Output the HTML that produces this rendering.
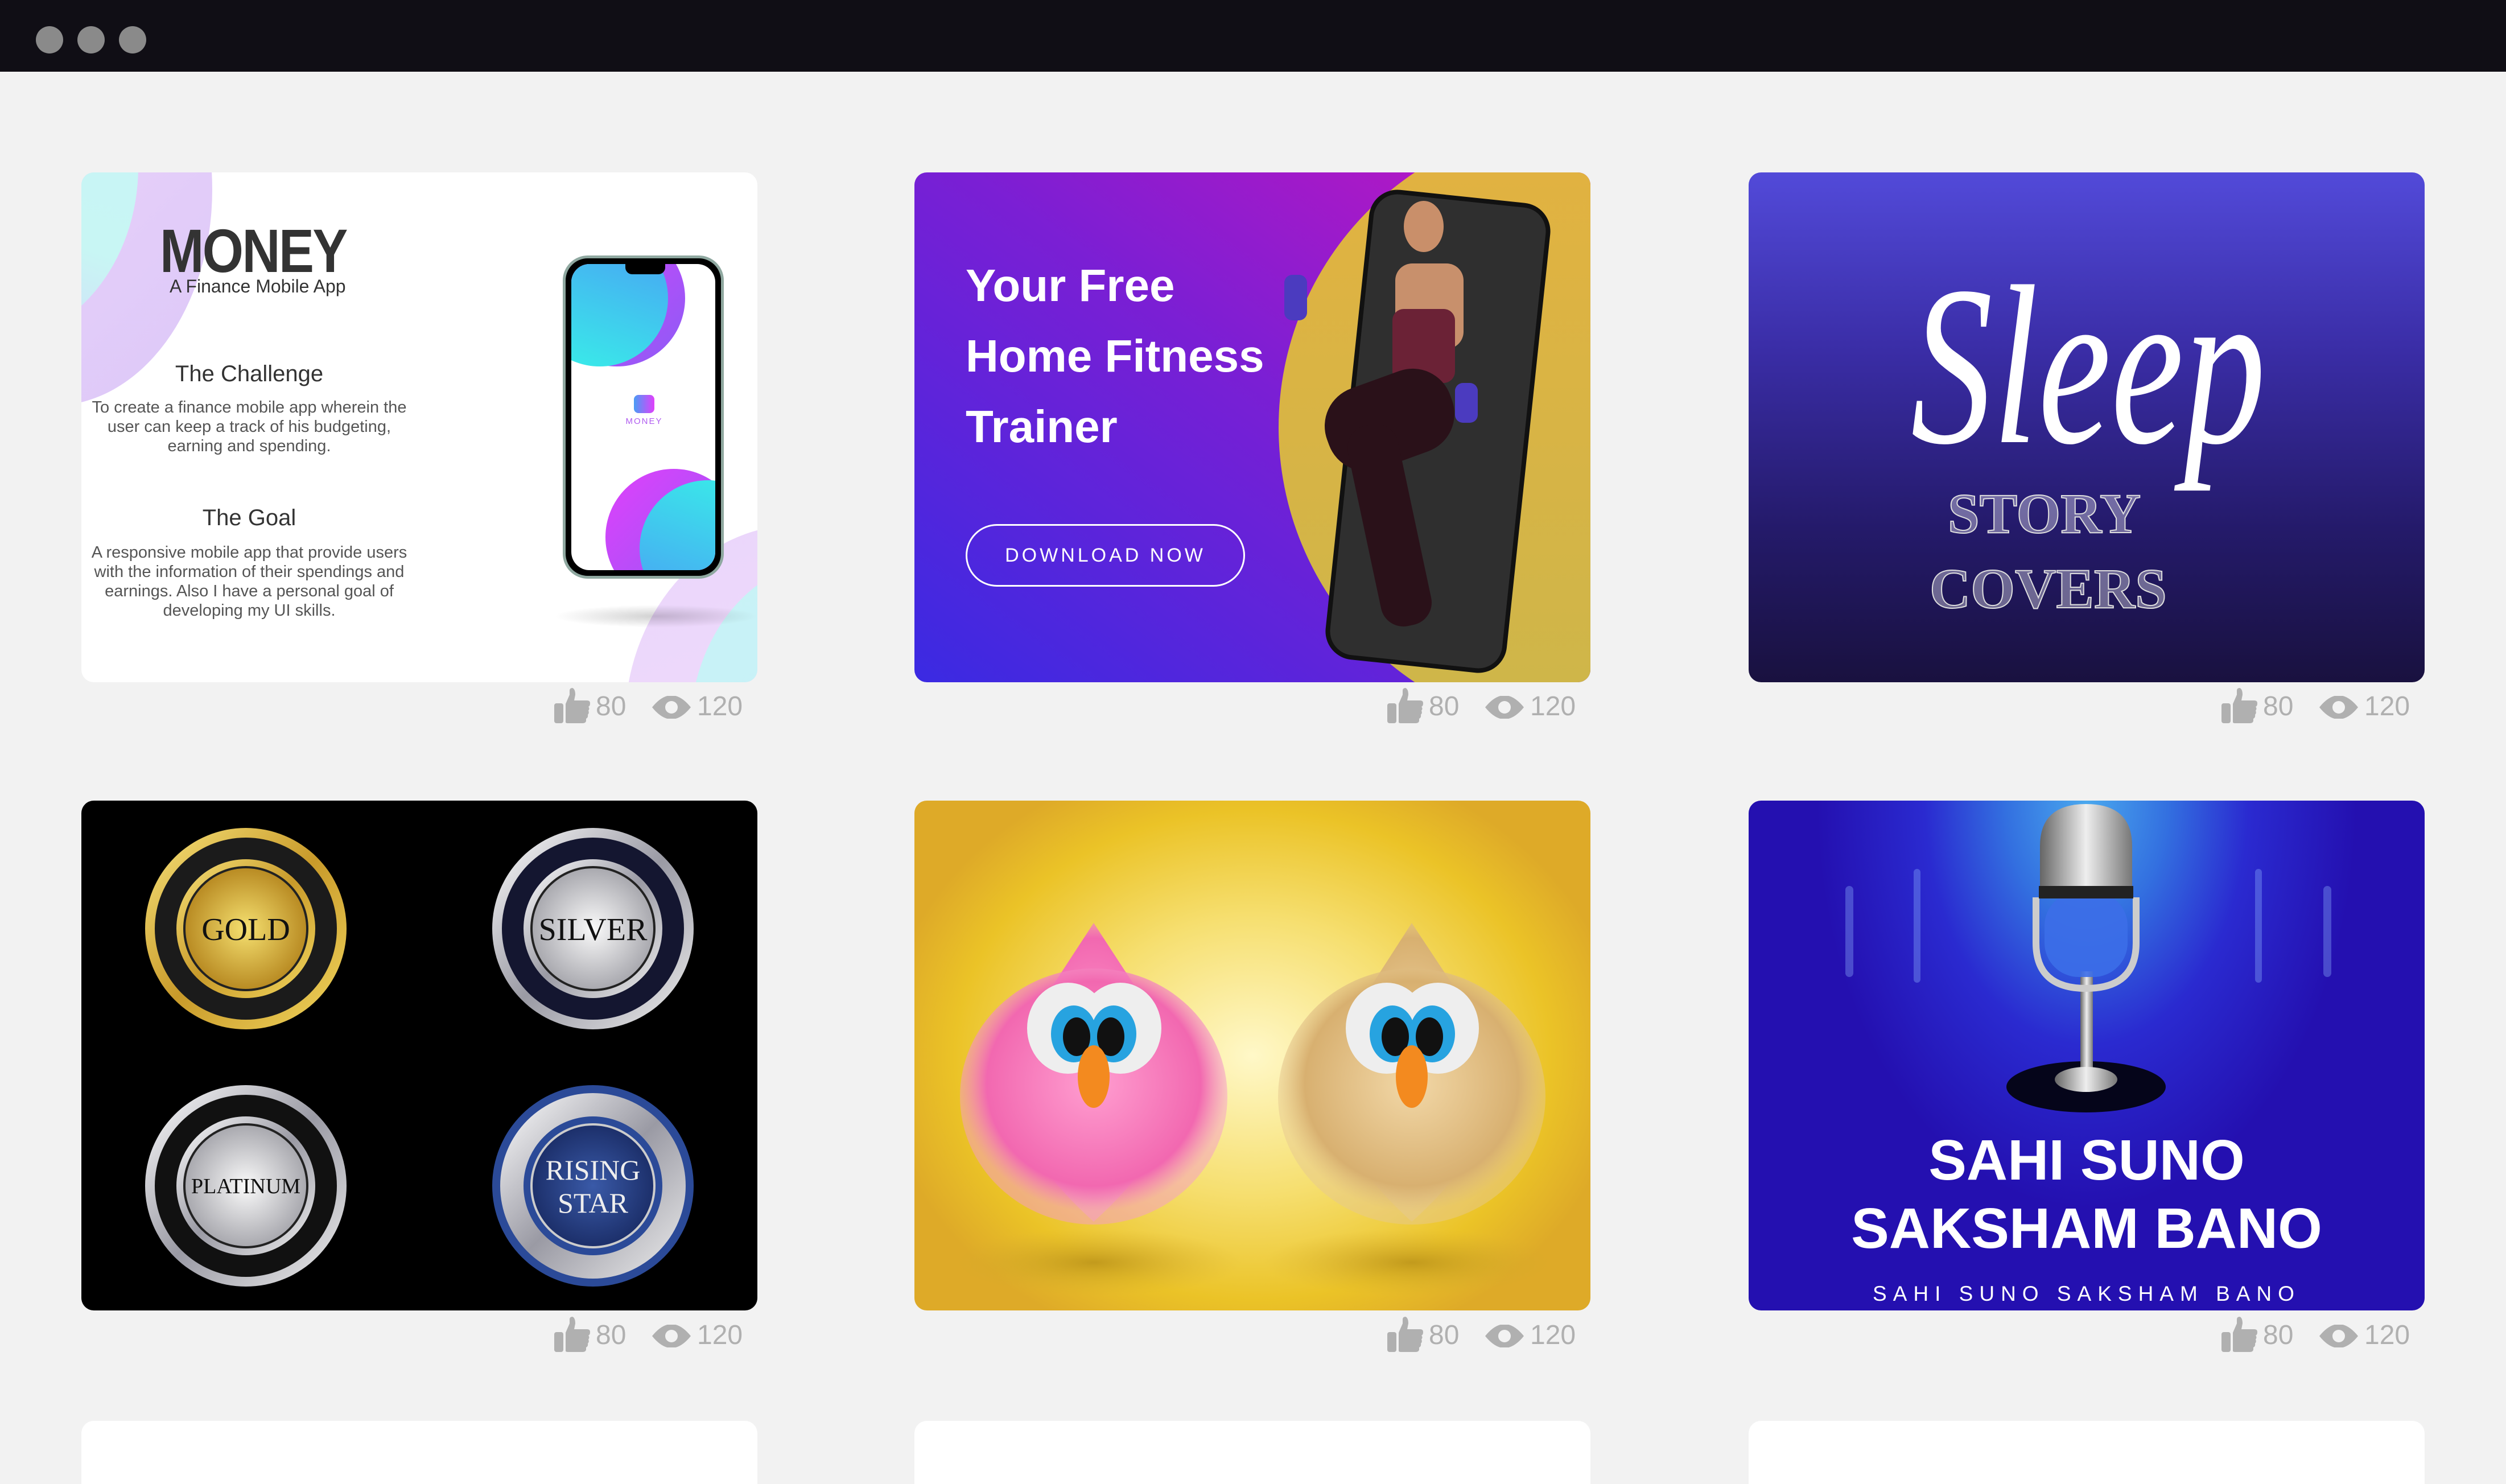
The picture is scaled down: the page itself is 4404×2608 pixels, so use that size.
<!DOCTYPE html>
<html style="width:4404px;height:2608px;overflow:hidden"><head><meta charset="utf-8"><style>
*{margin:0;padding:0;box-sizing:border-box}
body{width:4404px;height:2608px;background:#f2f2f2;position:relative;overflow:hidden;font-family:"Liberation Sans",sans-serif}
.bar{position:absolute;left:0;top:0;width:4404px;height:126px;background:#100e15}
.dot{position:absolute;top:46px;width:48px;height:48px;border-radius:50%;background:#8a8a8a}
.card{position:absolute;width:1188px;height:896px;border-radius:22px;overflow:hidden}
.abs{position:absolute}
.stats{position:absolute;width:360px;height:64px}
.stats span{position:absolute;top:8px;font-size:48px;color:#b0b0b0;line-height:50px}
</style></head><body>
<div class="bar"></div>
<div class="dot" style="left:63px"></div><div class="dot" style="left:136px"></div><div class="dot" style="left:209px"></div>

<!-- Card 1 -->
<div class="card" style="left:143px;top:303px;background:#fff">
  <div class="abs" style="left:-330px;top:-350px;width:560px;height:760px;border-radius:50%;background:linear-gradient(135deg,#f0d6fb,#dcc8f8)"></div>
  <div class="abs" style="left:-420px;top:-320px;width:520px;height:620px;border-radius:50%;background:linear-gradient(200deg,#c8f2f8,#c8f6f4 60%,#d6d0fa)"></div>
  <div class="abs" style="left:955px;top:620px;width:600px;height:700px;border-radius:50%;background:linear-gradient(160deg,#ead6fb,#f3dcfb)"></div>
  <div class="abs" style="left:1070px;top:680px;width:500px;height:600px;border-radius:50%;background:linear-gradient(160deg,#c9f3f6,#c6eefa)"></div>
  <div class="abs" style="left:138px;top:84px;font-size:108px;font-weight:bold;color:#333;line-height:1;letter-spacing:-3px;transform:scaleX(0.86);transform-origin:left top">MONEY</div>
  <div class="abs" style="left:155px;top:182px;font-size:32px;color:#333">A Finance Mobile App</div>
  <div class="abs" style="left:15px;top:332px;width:560px;text-align:center;font-size:40px;color:#333">The Challenge</div>
  <div class="abs" style="left:15px;top:396px;width:560px;text-align:center;font-size:29px;line-height:34px;color:#555">To create a finance mobile app wherein the user can keep a track of his budgeting, earning and spending.</div>
  <div class="abs" style="left:15px;top:585px;width:560px;text-align:center;font-size:40px;color:#333">The Goal</div>
  <div class="abs" style="left:15px;top:651px;width:560px;text-align:center;font-size:29px;line-height:34px;color:#555">A responsive mobile app that provide users with the information of their spendings and earnings. Also I have a personal goal of developing my UI skills.</div>
  <div class="abs" style="left:830px;top:760px;width:360px;height:40px;border-radius:50%;background:radial-gradient(ellipse,rgba(0,0,0,0.18),rgba(0,0,0,0) 70%)"></div>
  <div class="abs" style="left:846px;top:146px;width:283px;height:568px;border-radius:44px;border:5px solid #8fa8a0;background:#000;padding:10px">
    <div style="position:relative;width:100%;height:100%;border-radius:32px;background:#fff;overflow:hidden">
      <div class="abs" style="left:-40px;top:-60px;width:240px;height:240px;border-radius:50%;background:linear-gradient(135deg,#e040fb,#8b5cf6)"></div>
      <div class="abs" style="left:-70px;top:-60px;width:240px;height:240px;border-radius:50%;background:linear-gradient(200deg,#4a9cf5,#38f0e8)"></div>
      <div class="abs" style="left:60px;top:360px;width:240px;height:240px;border-radius:50%;background:linear-gradient(135deg,#e040fb,#8b5cf6)"></div>
      <div class="abs" style="left:120px;top:380px;width:240px;height:240px;border-radius:50%;background:linear-gradient(200deg,#38f0e8,#4a9cf5)"></div>
      <div class="abs" style="left:95px;top:0;width:70px;height:18px;background:#000;border-radius:0 0 12px 12px"></div>
      <div class="abs" style="left:110px;top:230px;width:36px;height:32px;border-radius:8px;background:linear-gradient(90deg,#4a9cf5,#e040fb)"></div>
      <div class="abs" style="left:70px;top:268px;width:116px;text-align:center;font-size:15px;color:#b05cf0;letter-spacing:2px">MONEY</div>
    </div>
  </div>
</div>

<!-- Card 2 -->
<div class="card" style="left:1607px;top:303px;background:linear-gradient(35deg,#3a2ae2 0%,#7a1fd4 55%,#c216c0 100%)">
  <div class="abs" style="left:640px;top:-91px;width:1078px;height:1078px;border-radius:50%;background:linear-gradient(180deg,#e3b240,#cdb64a)"></div>
  <div class="abs" style="left:760px;top:40px;width:320px;height:830px;border-radius:50px;background:#2f2f2f;border:8px solid #111;transform:rotate(6deg)"></div>
  <div class="abs" style="left:860px;top:50px;width:70px;height:90px;border-radius:50%;background:#c98f6a"></div>
  <div class="abs" style="left:845px;top:160px;width:120px;height:150px;border-radius:30px;background:#c8906c"></div>
  <div class="abs" style="left:840px;top:240px;width:110px;height:130px;border-radius:20px;background:#6b2236"></div>
  <div class="abs" style="left:720px;top:360px;width:230px;height:150px;border-radius:70px;background:#2a1119;transform:rotate(-20deg)"></div>
  <div class="abs" style="left:790px;top:440px;width:90px;height:360px;border-radius:40px;background:#2a1119;transform:rotate(-12deg)"></div>
  <div class="abs" style="left:650px;top:180px;width:40px;height:80px;border-radius:14px;background:#4b3bbf"></div>
  <div class="abs" style="left:950px;top:370px;width:40px;height:70px;border-radius:14px;background:#4b3bbf"></div>
  <div class="abs" style="left:90px;top:137px;font-size:80px;font-weight:bold;color:#fff;line-height:124px">Your Free<br>Home Fitness<br>Trainer</div>
  <div class="abs" style="left:90px;top:618px;width:491px;height:110px;border:3px solid #fff;border-radius:55px;color:#fff;font-size:34px;letter-spacing:5px;text-align:center;line-height:104px">DOWNLOAD NOW</div>
</div>

<!-- Card 3 -->
<div class="card" style="left:3073px;top:303px;background:linear-gradient(180deg,#524ad9 0%,#3a2da6 35%,#241a6a 70%,#19113f 100%)">
  <div class="abs" style="left:285px;top:140px;font-family:'Liberation Serif',serif;font-style:italic;font-size:400px;line-height:1;color:#fff;transform:scaleX(0.72);transform-origin:left top">Sleep</div>
  <div class="abs" style="left:350px;top:540px;font-family:'Liberation Serif',serif;font-weight:bold;font-size:100px;color:rgba(255,255,255,0.35);-webkit-text-stroke:2px #ddd;line-height:1.2">STORY</div>
  <div class="abs" style="left:318px;top:672px;font-family:'Liberation Serif',serif;font-weight:bold;font-size:100px;color:rgba(255,255,255,0.35);-webkit-text-stroke:2px #ddd;line-height:1.2">COVERS</div>
</div>

<!-- Card 4 -->
<div class="card" style="left:143px;top:1407px;background:#000">
  <svg class="abs" style="left:0;top:0" width="1188" height="896">
    <defs>
      <linearGradient id="g" x1="0" y1="0" x2="1" y2="1"><stop offset="0" stop-color="#f7e27a"/><stop offset=".5" stop-color="#c89a2a"/><stop offset="1" stop-color="#f2d65e"/></linearGradient>
      <linearGradient id="s" x1="0" y1="0" x2="1" y2="1"><stop offset="0" stop-color="#fff"/><stop offset=".5" stop-color="#9a9aa4"/><stop offset="1" stop-color="#eee"/></linearGradient>
      <radialGradient id="gi"><stop offset="0" stop-color="#f5e070"/><stop offset="1" stop-color="#b88a22"/></radialGradient>
      <radialGradient id="si"><stop offset="0" stop-color="#fafafa"/><stop offset="1" stop-color="#a8a8ae"/></radialGradient>
      <radialGradient id="bi"><stop offset="0" stop-color="#3a5aa8"/><stop offset="1" stop-color="#1c2f6a"/></radialGradient>
    </defs>
    <circle cx="289" cy="225" r="177" fill="url(#g)"/><circle cx="289" cy="225" r="160" fill="#1b1b1b"/><circle cx="289" cy="225" r="122" fill="url(#g)"/><circle cx="289" cy="225" r="108" fill="url(#gi)" stroke="#222" stroke-width="4"/>
    <circle cx="899" cy="225" r="177" fill="url(#s)"/><circle cx="899" cy="225" r="160" fill="#141630"/><circle cx="899" cy="225" r="122" fill="url(#s)"/><circle cx="899" cy="225" r="108" fill="url(#si)" stroke="#222" stroke-width="4"/>
    <circle cx="289" cy="677" r="177" fill="url(#s)"/><circle cx="289" cy="677" r="160" fill="#111"/><circle cx="289" cy="677" r="122" fill="url(#s)"/><circle cx="289" cy="677" r="108" fill="url(#si)" stroke="#222" stroke-width="4"/>
    <circle cx="899" cy="677" r="177" fill="#2b4a98"/><circle cx="899" cy="677" r="163" fill="url(#s)"/><circle cx="899" cy="677" r="122" fill="#2b4a98"/><circle cx="899" cy="677" r="108" fill="url(#bi)" stroke="#ccc" stroke-width="4"/>
    <g font-family="Liberation Serif,serif" text-anchor="middle">
      <text x="289" y="245" font-size="56" fill="#111">GOLD</text>
      <text x="899" y="245" font-size="56" fill="#111">SILVER</text>
      <text x="289" y="690" font-size="38" fill="#111">PLATINUM</text>
      <text x="899" y="666" font-size="50" fill="#eee">RISING</text>
      <text x="899" y="724" font-size="50" fill="#eee">STAR</text>
    </g>
  </svg>
</div>

<!-- Card 5 -->
<div class="card" style="left:1607px;top:1407px;background:radial-gradient(ellipse 55% 60% at 50% 50%,#fff8c8 0%,#f6df70 45%,#ebc327 80%,#deaa28 100%)">
  <svg class="abs" style="left:0;top:0" width="1188" height="896">
    <defs>
      <radialGradient id="sh"><stop offset="0" stop-color="#b8901a" stop-opacity=".8"/><stop offset="1" stop-color="#d9b030" stop-opacity="0"/></radialGradient>
      <radialGradient id="pk" cx=".5" cy=".45"><stop offset="0" stop-color="#ff9ed0"/><stop offset=".8" stop-color="#f268b0"/><stop offset="1" stop-color="#f59ccc" stop-opacity=".5"/></radialGradient>
      <radialGradient id="tn" cx=".5" cy=".45"><stop offset="0" stop-color="#f2d8a8"/><stop offset=".8" stop-color="#d8b070"/><stop offset="1" stop-color="#e6c890" stop-opacity=".5"/></radialGradient>
    </defs>
    <ellipse cx="315" cy="812" rx="260" ry="60" fill="url(#sh)"/>
    <ellipse cx="874" cy="812" rx="260" ry="60" fill="url(#sh)"/>
    <path d="M315 215 L390 330 Q560 520 315 740 Q70 520 240 330 Z" fill="url(#pk)"/>
    <ellipse cx="315" cy="520" rx="235" ry="225" fill="url(#pk)"/>
    <path d="M874 215 L950 330 Q1120 520 874 740 Q630 520 800 330 Z" fill="url(#tn)"/>
    <ellipse cx="874" cy="520" rx="235" ry="225" fill="url(#tn)"/>
    <g>
      <ellipse cx="270" cy="400" rx="72" ry="80" fill="#eee"/><ellipse cx="362" cy="400" rx="72" ry="80" fill="#eee"/>
      <ellipse cx="280" cy="410" rx="40" ry="50" fill="#27a3e0"/><ellipse cx="350" cy="410" rx="40" ry="50" fill="#27a3e0"/>
      <ellipse cx="285" cy="415" rx="24" ry="34" fill="#111"/><ellipse cx="345" cy="415" rx="24" ry="34" fill="#111"/>
      <ellipse cx="315" cy="485" rx="28" ry="55" fill="#f38a1f"/>
    </g>
    <g>
      <ellipse cx="830" cy="400" rx="72" ry="80" fill="#eee"/><ellipse cx="920" cy="400" rx="72" ry="80" fill="#eee"/>
      <ellipse cx="840" cy="410" rx="40" ry="50" fill="#27a3e0"/><ellipse cx="910" cy="410" rx="40" ry="50" fill="#27a3e0"/>
      <ellipse cx="845" cy="415" rx="24" ry="34" fill="#111"/><ellipse cx="905" cy="415" rx="24" ry="34" fill="#111"/>
      <ellipse cx="874" cy="485" rx="28" ry="55" fill="#f38a1f"/>
    </g>
  </svg>
</div>

<!-- Card 6 -->
<div class="card" style="left:3073px;top:1407px;background:radial-gradient(ellipse 40% 80% at 50% 0%,#4aa8ee 0%,#3370e0 30%,#2a2ad0 60%,#2410b0 100%)">
  <svg class="abs" style="left:0;top:0" width="1188" height="896">
    <defs><linearGradient id="mh" x1="0" x2="1"><stop offset="0" stop-color="#666"/><stop offset=".5" stop-color="#eee"/><stop offset="1" stop-color="#777"/></linearGradient></defs>
    <g fill="#8fb8ff" opacity=".35"><rect x="170" y="150" width="14" height="160" rx="7"/><rect x="1010" y="150" width="14" height="160" rx="7"/><rect x="290" y="120" width="12" height="200" rx="6"/><rect x="890" y="120" width="12" height="200" rx="6"/></g>
    <ellipse cx="593" cy="503" rx="140" ry="45" fill="#05051a"/>
    <rect x="583" y="300" width="22" height="200" fill="url(#mh)"/>
    <ellipse cx="593" cy="490" rx="55" ry="22" fill="url(#mh)"/>
    <path d="M505 170 L505 250 Q505 330 593 330 Q681 330 681 250 L681 170" fill="none" stroke="#ccc" stroke-width="12"/>
    <rect x="520" y="160" width="146" height="150" rx="60" fill="#3c6ee8" opacity=".9"/>
    <rect x="510" y="150" width="166" height="22" fill="#222"/>
    <path d="M512 150 L512 80 Q512 6 593 6 Q674 6 674 80 L674 150 Z" fill="url(#mh)"/>
  </svg>
  <div class="abs" style="left:0;top:572px;width:1188px;text-align:center;font-size:100px;font-weight:900;color:#fff;line-height:120px">SAHI SUNO<br>SAKSHAM BANO</div>
  <div class="abs" style="left:0;top:846px;width:1188px;text-align:center;font-size:37px;letter-spacing:11px;color:#fff">SAHI SUNO SAKSHAM BANO</div>
</div>

<!-- row 3 -->
<div class="card" style="left:143px;top:2497px;height:111px;border-radius:22px 22px 0 0;background:#fff"></div>
<div class="card" style="left:1607px;top:2497px;height:111px;border-radius:22px 22px 0 0;background:#fff"></div>
<div class="card" style="left:3073px;top:2497px;height:111px;border-radius:22px 22px 0 0;background:#fff"></div>

<!-- stats -->
<svg width="0" height="0" style="position:absolute"><defs>
<g id="thumb"><rect x="0" y="27" width="16" height="35" rx="4" fill="#b0b0b0"/><path d="M20 28 L27 12 L27 5 Q27 0 32 0 Q37 2 37 12 L35 22 L58 22 Q63 22 63 27 Q63 32 60 33 Q63 36 60 40 Q62 44 59 47 Q60 52 56 54 L56 58 Q55 62 50 62 L24 62 Q20 62 20 60 Z" fill="#b0b0b0"/></g>
<g id="eye"><path d="M0 20 Q34 -22 68 20 Q34 62 0 20 Z" fill="#b0b0b0"/><circle cx="34" cy="20" r="11" fill="#f2f2f2"/></g>
</defs></svg>
<div class="stats" style="left:974px;top:1209px"><svg class="abs" style="left:0;top:0" width="64" height="62"><use href="#thumb"/></svg><span style="left:73px">80</span><svg class="abs" style="left:172px;top:14px" width="68" height="40"><use href="#eye"/></svg><span style="left:251px">120</span></div>
<div class="stats" style="left:2438px;top:1209px"><svg class="abs" style="left:0;top:0" width="64" height="62"><use href="#thumb"/></svg><span style="left:73px">80</span><svg class="abs" style="left:172px;top:14px" width="68" height="40"><use href="#eye"/></svg><span style="left:251px">120</span></div>
<div class="stats" style="left:3904px;top:1209px"><svg class="abs" style="left:0;top:0" width="64" height="62"><use href="#thumb"/></svg><span style="left:73px">80</span><svg class="abs" style="left:172px;top:14px" width="68" height="40"><use href="#eye"/></svg><span style="left:251px">120</span></div>
<div class="stats" style="left:974px;top:2314px"><svg class="abs" style="left:0;top:0" width="64" height="62"><use href="#thumb"/></svg><span style="left:73px">80</span><svg class="abs" style="left:172px;top:14px" width="68" height="40"><use href="#eye"/></svg><span style="left:251px">120</span></div>
<div class="stats" style="left:2438px;top:2314px"><svg class="abs" style="left:0;top:0" width="64" height="62"><use href="#thumb"/></svg><span style="left:73px">80</span><svg class="abs" style="left:172px;top:14px" width="68" height="40"><use href="#eye"/></svg><span style="left:251px">120</span></div>
<div class="stats" style="left:3904px;top:2314px"><svg class="abs" style="left:0;top:0" width="64" height="62"><use href="#thumb"/></svg><span style="left:73px">80</span><svg class="abs" style="left:172px;top:14px" width="68" height="40"><use href="#eye"/></svg><span style="left:251px">120</span></div>
</body></html>
